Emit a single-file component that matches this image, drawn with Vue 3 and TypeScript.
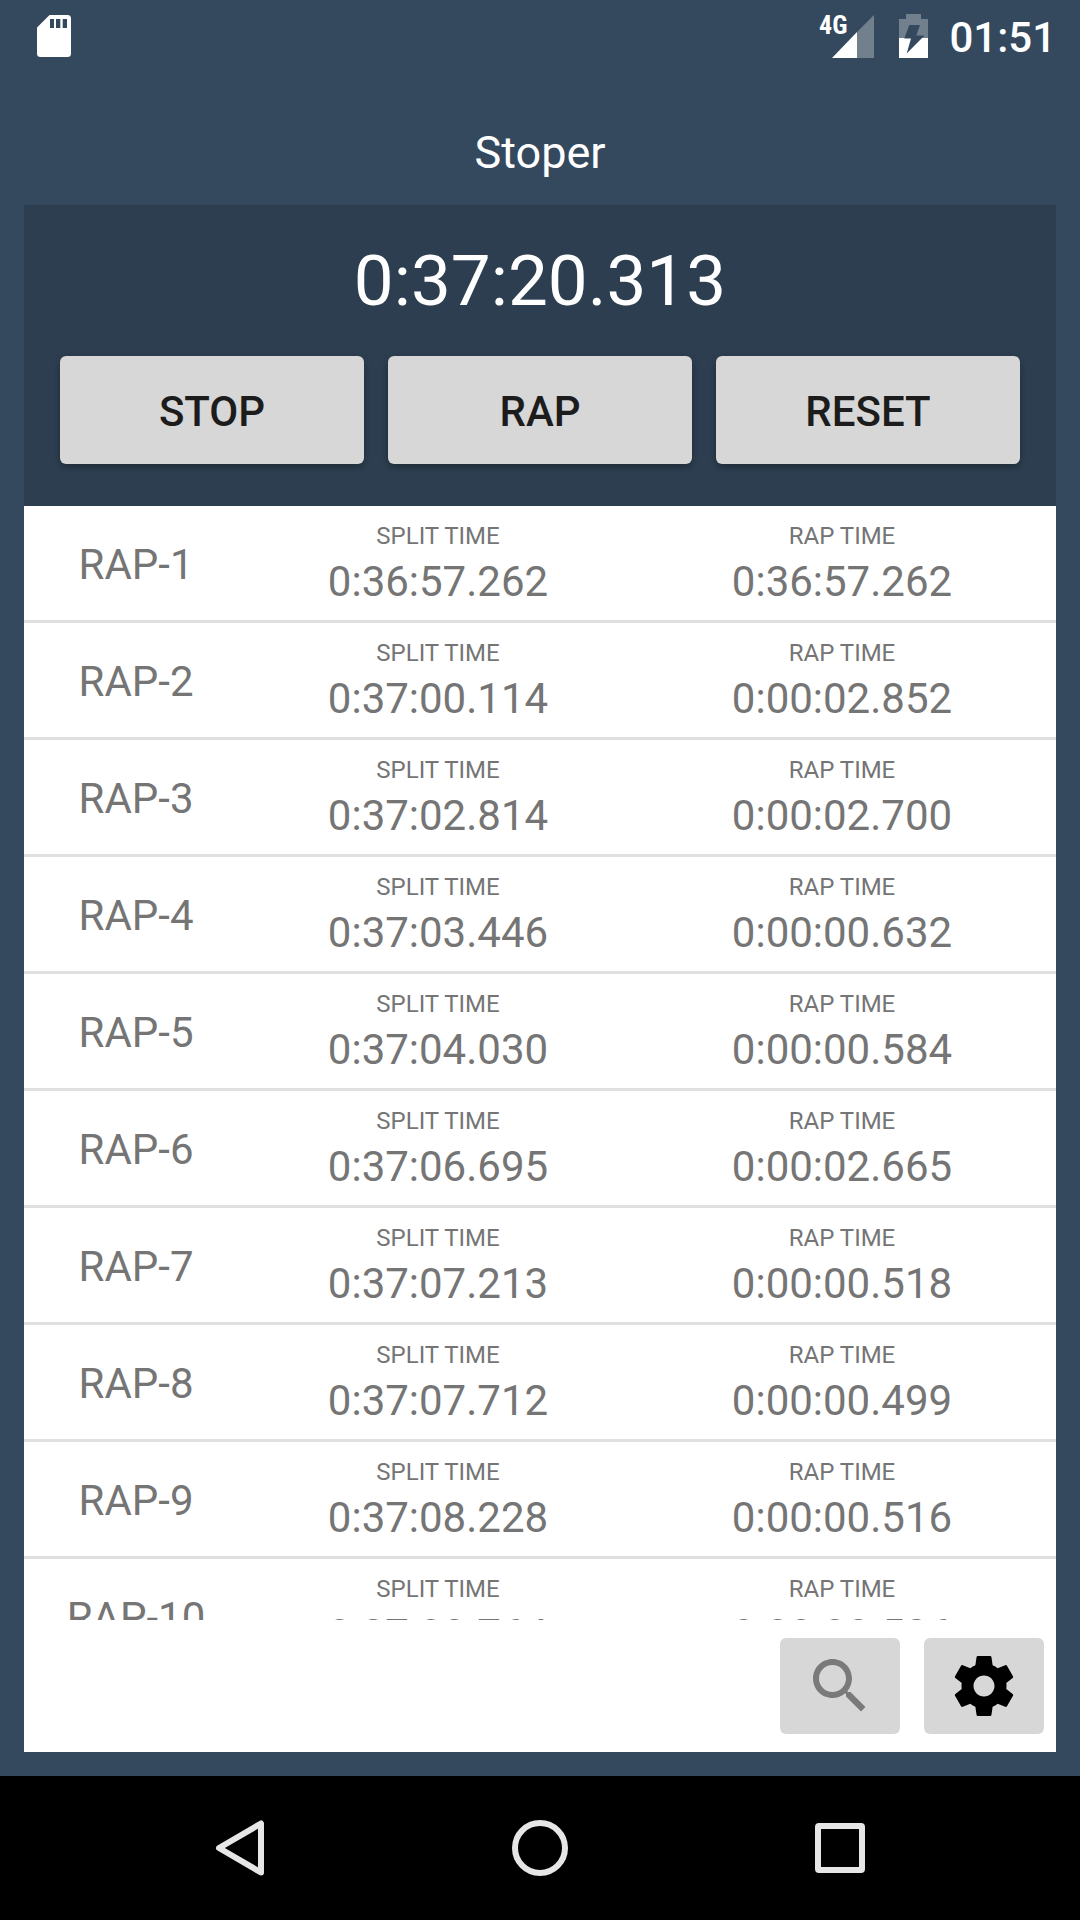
<script setup lang="ts">
interface Lap {
  name: string
  split: string
  time: string
}

const title = 'Stoper'
const elapsed = '0:37:20.313'
const actions: string[] = ['STOP', 'RAP', 'RESET']

const laps: Lap[] = [
  { name: 'RAP-1', split: '0:36:57.262', time: '0:36:57.262' },
  { name: 'RAP-2', split: '0:37:00.114', time: '0:00:02.852' },
  { name: 'RAP-3', split: '0:37:02.814', time: '0:00:02.700' },
  { name: 'RAP-4', split: '0:37:03.446', time: '0:00:00.632' },
  { name: 'RAP-5', split: '0:37:04.030', time: '0:00:00.584' },
  { name: 'RAP-6', split: '0:37:06.695', time: '0:00:02.665' },
  { name: 'RAP-7', split: '0:37:07.213', time: '0:00:00.518' },
  { name: 'RAP-8', split: '0:37:07.712', time: '0:00:00.499' },
  { name: 'RAP-9', split: '0:37:08.228', time: '0:00:00.516' },
  { name: 'RAP-10', split: '0:37:08.764', time: '0:00:00.536' },
]
</script>

<template>
  <div class="screen">
    <div class="status">
      <svg class="sd" viewBox="0 0 34 42" width="34" height="42" aria-hidden="true">
        <path
          fill="#fff"
          fill-rule="evenodd"
          d="M12.5 0H30.500a3.500 3.500 0 0 1 3.500 3.500V38.500a3.500 3.500 0 0 1-3.500 3.500H3.500A3.500 3.500 0 0 1 0 38.500V12.500ZM13 4v9h4V4ZM19 4v9h4.300V4ZM25.700 4v9H30V4Z"
        />
      </svg>
      <div class="indicators">
        <div class="network">
          <span class="generation">4G</span>
          <svg viewBox="0 0 42 43" width="42" height="43" aria-hidden="true">
            <path fill="#72808e" d="M42 0V43H25V17Z" />
            <path fill="#fff" d="M25 17V43H0Z" />
          </svg>
        </div>
        <svg viewBox="0 0 29 44" width="29" height="44" aria-hidden="true">
          <path fill="#72808e" d="M7 0H22V5H29V24H0V5H7Z" />
          <path fill="#fff" d="M0 24H29V44H0Z" />
          <path fill="#34495e" d="M10.300 11H21L17.300 21.500H25.500L7.700 39.500L12 24.500H5.300Z" />
        </svg>
        <time class="clock">01:51</time>
      </div>
    </div>

    <h1 class="title">{{ title }}</h1>

    <main class="card">
      <section class="panel">
        <div class="elapsed">{{ elapsed }}</div>
        <div class="actions">
          <button v-for="action in actions" :key="action" type="button" class="action">{{ action }}</button>
        </div>
      </section>

      <div class="list">
        <table class="laps">
          <colgroup>
            <col class="name-col" />
            <col />
            <col />
          </colgroup>
          <tbody>
            <tr v-for="lap in laps" :key="lap.name">
              <th scope="row">{{ lap.name }}</th>
              <td>
                <div class="label">SPLIT TIME</div>
                <div class="value">{{ lap.split }}</div>
              </td>
              <td>
                <div class="label">RAP TIME</div>
                <div class="value">{{ lap.time }}</div>
              </td>
            </tr>
          </tbody>
        </table>
      </div>

      <div class="tools">
        <button type="button" class="tool" aria-label="Search">
          <svg viewBox="0 0 24 24" width="72" height="72" fill="#7a7a7a">
            <path d="M15.5 14h-.79l-.28-.27C15.41 12.59 16 11.11 16 9.5 16 5.91 13.09 3 9.5 3S3 5.91 3 9.5 5.91 16 9.5 16c1.61 0 3.09-.59 4.23-1.57l.27.28v.79l5 4.99L20.49 19l-4.99-5zm-6 0C7.01 14 5 11.99 5 9.500S7.010 5 9.500 5 14 7.010 14 9.500 11.990 14 9.500 14z" />
          </svg>
        </button>
        <button type="button" class="tool" aria-label="Settings">
          <svg viewBox="0 0 24 24" width="72" height="72" fill="#000">
            <path d="M19.43 12.98c.04-.32.07-.64.07-.98s-.03-.66-.07-.98l2.11-1.65c.19-.15.24-.42.12-.64l-2-3.46c-.12-.22-.39-.3-.61-.22l-2.49 1c-.52-.4-1.08-.73-1.69-.98l-.38-2.65C14.46 2.18 14.25 2 14 2h-4c-.25 0-.46.18-.49.42l-.38 2.65c-.61.25-1.17.59-1.69.98l-2.49-1c-.23-.09-.49 0-.61.22l-2 3.46c-.13.22-.07.49.12.64l2.11 1.65c-.04.32-.07.65-.07.98s.03.66.07.98l-2.11 1.65c-.19.15-.24.42-.12.64l2 3.46c.12.22.39.3.61.22l2.49-1c.52.4 1.08.73 1.69.98l.38 2.65c.03.24.24.42.49.42h4c.25 0 .46-.18.49-.42l.38-2.65c.61-.25 1.17-.59 1.69-.98l2.49 1c.23.09.49 0 .61-.22l2-3.46c.12-.22.07-.49-.12-.64l-2.11-1.65zM12 15.5c-1.93 0-3.5-1.57-3.5-3.5s1.57-3.5 3.5-3.5 3.5 1.57 3.5 3.5-1.57 3.5-3.5 3.5z" />
          </svg>
        </button>
      </div>
    </main>

    <nav class="navbar">
      <button type="button" aria-label="Back">
        <svg viewBox="0 0 56 56" width="56" height="56">
          <path d="M49 3.500V52.500L7 28Z" />
        </svg>
      </button>
      <button type="button" aria-label="Home">
        <svg viewBox="0 0 56 56" width="56" height="56">
          <circle cx="28" cy="28" r="25" />
        </svg>
      </button>
      <button type="button" aria-label="Overview">
        <svg viewBox="0 0 56 56" width="56" height="56">
          <rect x="6" y="6" width="44" height="44" rx="1" />
        </svg>
      </button>
    </nav>
  </div>
</template>

<style>
body {
  background: #34495e;
}
</style>

<style scoped>
.screen {
  display: flex;
  flex-direction: column;
  height: 100vh;
  overflow: hidden;
  background: #34495e;
  color: #fff;
  font-family: Roboto, 'Noto Sans', sans-serif;
}

button {
  padding: 0;
  border: 0;
  background: none;
  font-family: inherit;
  cursor: pointer;
}

svg {
  display: block;
}

.status {
  display: flex;
  align-items: center;
  justify-content: space-between;
  flex: none;
  height: 72px;
  padding: 0 24px 0 37px;
}

.indicators {
  display: flex;
  align-items: center;
  gap: 24px;
}

.network {
  position: relative;
  margin-right: 1px;
}

.generation {
  position: absolute;
  right: 27px;
  top: -2px;
  font: bold 26px/24px 'Roboto Condensed', Roboto, sans-serif;
}

.clock {
  margin-left: -3px;
  padding-top: 3px;
  font-size: 42px;
  line-height: 48px;
  font-weight: 500;
}

.title {
  flex: none;
  margin: 0;
  padding: 55px 0 26px;
  font-size: 45px;
  line-height: 52px;
  font-weight: 400;
  text-align: center;
}

.card {
  display: flex;
  flex: 1;
  flex-direction: column;
  min-height: 0;
  margin: 0 24px 24px;
  background: #fff;
}

.panel {
  flex: none;
  padding: 34px 36px 42px;
  background: #2c3e50;
}

.elapsed {
  margin-bottom: 33px;
  font-size: 71px;
  line-height: 84px;
  text-align: center;
}

.actions {
  display: flex;
  gap: 24px;
}

.action {
  flex: 1;
  height: 108px;
  padding-top: 2px;
  border-radius: 6px;
  background: #d7d7d7;
  box-shadow: 0 3px 6px rgba(0, 0, 0, 0.3);
  color: #1c1c1c;
  font-size: 42px;
  font-weight: 500;
}

.list {
  flex: 1;
  min-height: 0;
  overflow: hidden;
}

.laps {
  width: 100%;
  border-spacing: 0;
  table-layout: fixed;
  color: #757575;
  font-size: 42px;
  text-align: center;
}

.name-col {
  width: 212px;
}

.laps th,
.laps td {
  padding: 12px 0 10px;
  border-bottom: 3px solid #e0e0e0;
  font-weight: 400;
}

.laps th {
  padding-left: 12px;
}

.laps td {
  padding-right: 6px;
}

.laps td:last-child {
  padding-right: 18px;
}

.label {
  font-size: 24px;
  line-height: 36px;
}

.value {
  line-height: 56px;
}

.tools {
  display: flex;
  flex: none;
  justify-content: flex-end;
  gap: 24px;
  padding: 18px 12px;
}

.tool {
  display: flex;
  align-items: center;
  justify-content: center;
  width: 120px;
  height: 96px;
  border-radius: 6px;
  background: #d7d7d7;
}

.navbar {
  display: flex;
  flex: none;
  height: 144px;
  padding: 0 90px;
  background: #000;
}

.navbar button {
  display: flex;
  flex: 1;
  align-items: center;
  justify-content: center;
}

.navbar svg {
  fill: none;
  stroke: #e6e6e6;
  stroke-width: 6px;
  stroke-linejoin: round;
}
</style>
